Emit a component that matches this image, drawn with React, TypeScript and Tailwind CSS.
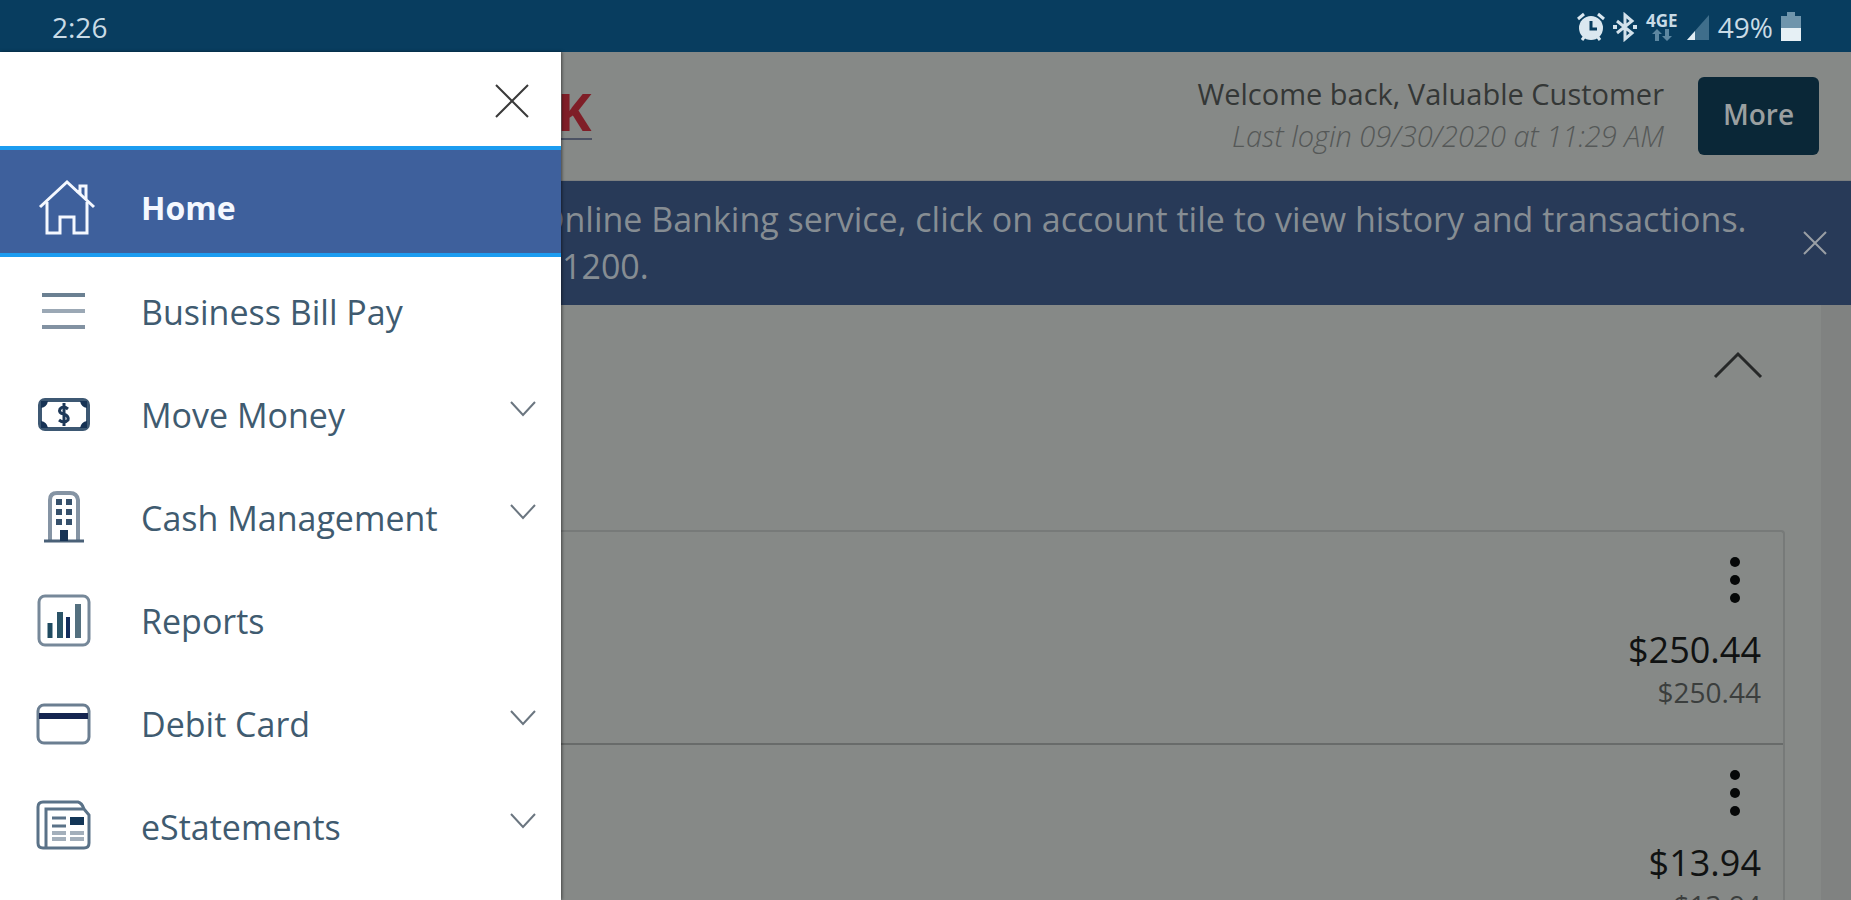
import type { ReactNode } from "react";

const HomeIcon = () => (
  <svg viewBox="0 0 56 60" className="h-[60px] w-14 overflow-visible" fill="none" stroke="#f4f8ff" strokeWidth="3">
    <path d="M4 29 L31 4 L58 29" />
    <path d="M41 13 L44 15 V8 H50 V21" />
    <path d="M11 24 V55 H24 V39 H38 V55 H51 V24" />
  </svg>
);

const LinesIcon = () => (
  <svg viewBox="0 0 56 60" className="h-[60px] w-14" strokeWidth="4">
    <path d="M6 13 H49" stroke="#6b8092" />
    <path d="M6 29 H49" stroke="#9ba8b5" />
    <path d="M6 45 H49" stroke="#8292a2" />
  </svg>
);

const MoneyIcon = () => (
  <svg viewBox="0 0 56 60" className="h-[60px] w-14" fill="none" stroke="#3d5873">
    <rect x="4" y="15" width="48" height="29" rx="5" strokeWidth="4" />
    <path d="M5 16 H12 Q11 22 5 23 Z M51 16 H44 Q45 22 51 23 Z M5 43 H12 Q11 37 5 36 Z M51 43 H44 Q45 37 51 36 Z" fill="#173355" stroke="none" />
    <path d="M32 24 Q27 20 24 24 Q22 28 28 29 Q33 31 32 35 Q28 39 23 35 M28 18 V41" stroke="#1d3858" strokeWidth="3" />
  </svg>
);

const BuildingIcon = () => (
  <svg viewBox="0 0 56 60" className="h-[60px] w-14" fill="none" stroke="#8594a4">
    <path d="M14 53 V12 Q14 5 21 5 H34 Q41 5 42 12 V53" strokeWidth="4" />
    <path d="M8 53 H48" stroke="#4a6178" strokeWidth="3" />
    <path d="M20 14 H26 M30 14 H36 M20 24 H26 M30 24 H36 M20 34 H26 M30 34 H36" stroke="#35506b" strokeWidth="6" />
    <path d="M24 53 V42 H32 V53 Z" fill="#173355" stroke="none" />
  </svg>
);

const ReportIcon = () => (
  <svg viewBox="0 0 56 60" className="h-[60px] w-14" fill="none" stroke="#768899">
    <rect x="3" y="5" width="50" height="49" rx="6" strokeWidth="3" />
    <path d="M14 47 V32" stroke="#1f4a60" strokeWidth="5" />
    <path d="M24 47 V21" stroke="#2b5468" strokeWidth="6" />
    <path d="M32 47 V26" stroke="#132c5c" strokeWidth="4" />
    <path d="M42 47 V13" stroke="#54707f" strokeWidth="6" />
  </svg>
);

const CardIcon = () => (
  <svg viewBox="0 0 56 60" className="h-[60px] w-14" fill="none" stroke="#6b7e91">
    <rect x="2" y="11" width="51" height="38" rx="6" strokeWidth="3" />
    <path d="M3 22 H52" stroke="#14244f" strokeWidth="6" />
  </svg>
);

const StatementIcon = () => (
  <svg viewBox="0 0 56 60" className="h-[60px] w-14" fill="none" stroke="#5a7288" strokeWidth="3">
    <path d="M10 50 V12 H48 L53 18 V46 Q53 51 48 51 H7 Q2 51 2 46 V10 Q2 5 7 5 H42 Q46 6 48 12" />
    <path d="M16 21 H30 M16 29 H30" />
    <path d="M16 36 H30 M16 42 H30 M34 36 H48 M34 42 H48" stroke="#a3afbb" strokeWidth="4" />
    <path d="M34 24 H48" stroke="#133657" strokeWidth="8" />
  </svg>
);

const Chevron = () => (
  <svg viewBox="0 0 28 16" className="mr-6 mb-3 h-4 w-7" fill="none" stroke="#6b7680" strokeWidth="2">
    <path d="M2 1 L14 14 L26 1" />
  </svg>
);

type NavItem = { label: string; icon: ReactNode; expandable?: boolean };

const navItems: NavItem[] = [
  { label: "Business Bill Pay", icon: <LinesIcon /> },
  { label: "Move Money", icon: <MoneyIcon />, expandable: true },
  { label: "Cash Management", icon: <BuildingIcon />, expandable: true },
  { label: "Reports", icon: <ReportIcon /> },
  { label: "Debit Card", icon: <CardIcon />, expandable: true },
  { label: "eStatements", icon: <StatementIcon />, expandable: true },
];

const accounts = [
  { balance: "$250.44", available: "$250.44" },
  { balance: "$13.94", available: "$13.94" },
];

const StatusBar = () => (
  <div className="flex h-[52px] shrink-0 items-center justify-between bg-[#083d5f] pt-0.5 pr-[50px] pl-[52px] text-[28px] leading-8 text-[#c9dbe6]">
    <span>2:26</span>
    <div className="flex items-center gap-1.5">
      {/* Alarm */}
      <svg viewBox="0 0 30 30" className="size-[30px]" fill="#dbe8f0">
        <circle cx="15" cy="16" r="12" />
        <path d="M2 7 L8 2 M28 7 L22 2 M6 28 L9 24 M24 28 L21 24" stroke="#dbe8f0" strokeWidth="3" />
        <path d="M15 9 V17 H21" fill="none" stroke="#083d5f" strokeWidth="3" />
      </svg>
      {/* Bluetooth */}
      <svg viewBox="0 0 26 30" className="h-[30px] w-[26px]" fill="none" stroke="#d3e2eb" strokeWidth="3">
        <path d="M5 9 L20 21 L13 27 V3 L20 9 L5 21" />
        <path d="M1 15 H5 M21 15 H25" strokeWidth="4" />
      </svg>
      {/* Network */}
      <div className="flex w-9 flex-col items-center">
        <span className="text-[17px] leading-4 font-bold">4GE</span>
        <svg viewBox="0 0 20 12" className="h-3 w-5" fill="#5d87a1">
          <path d="M5 0 L10 5 H7 V12 H3 V5 H0 Z M15 12 L10 7 H13 V0 H17 V7 H20 Z" />
        </svg>
      </div>
      <svg viewBox="0 0 24 28" className="h-7 w-6">
        <path d="M23 2 V27 H1 Z" fill="#3f6e8b" />
        <path d="M9 18 V27 H1 Z" fill="#e3eef4" />
      </svg>
      <span className="px-0.5">49%</span>
      <svg viewBox="0 0 20 30" className="h-[30px] w-5">
        <path d="M6 0 H14 V4 H20 V17 H0 V4 H6 Z" fill="#6f95ac" />
        <path d="M0 16 H20 V29 H0 Z" fill="#e6f0f5" />
      </svg>
    </div>
  </div>
);

const Drawer = () => (
  <aside className="absolute inset-y-0 left-0 w-[561px] overflow-hidden bg-white shadow-[1px_0_3px_rgba(0,0,0,0.5)]">
    <div className="flex h-[94px] items-center justify-end pt-1 pr-8">
      <button type="button" aria-label="Close menu">
        <svg viewBox="0 0 34 34" className="size-[34px]" fill="none" stroke="#3a3a3a" strokeWidth="2">
          <path d="M1 1 L33 33 M33 1 L1 33" />
        </svg>
      </button>
    </div>
    <nav className="text-[34px] leading-10 text-[#3f5b70]">
      <a href="#home" className="flex h-[111px] items-center border-y-4 border-[#1c9cf0] bg-[#3e609c] pt-3 pl-9 text-[32px] font-bold text-[#f4f8ff]">
        <HomeIcon />
        <span className="pl-[49px]">Home</span>
      </a>
      <div className="pt-[3px]">
        {navItems.map((item) => (
          <button key={item.label} type="button" className="flex h-[103px] w-full items-center pl-9 text-left">
            {item.icon}
            <span className="flex-1 pl-[49px]">{item.label}</span>
            {item.expandable && <Chevron />}
          </button>
        ))}
      </div>
    </nav>
  </aside>
);

const App = () => {
  return (
    <div className="flex h-screen flex-col overflow-hidden font-['Open_Sans','Noto_Sans',sans-serif]">
      <StatusBar />
      <div className="relative flex min-h-0 flex-1 flex-col bg-[#868987]">
        {/* Header */}
        <header className="flex h-[129px] shrink-0 items-start justify-between border-b border-[#7c7f80] pr-8 pl-[557px]">
          <div className="mt-8 h-14 border-b-2 border-[#4c5263] text-[52px] leading-[54px] font-bold text-[#7f1e27]">K</div>
          <div className="flex gap-[34px] pt-[25px]">
            <div className="-mt-1 text-right text-[29px] leading-[42px]">
              <p className="text-[#343736]">Welcome back, Valuable Customer</p>
              <p className="font-light text-[#555857] italic">Last login 09/30/2020 at 11:29 AM</p>
            </div>
            <button type="button" className="h-[78px] w-[121px] rounded-md bg-[#0a2737] pb-1 text-[28px] font-semibold text-[#9a9fa0]">More</button>
          </div>
        </header>

        {/* Notice */}
        <div className="flex h-[124px] shrink-0 items-center justify-between bg-[#283a58] pr-6 pl-[538px]">
          <p className="text-[34px] leading-[47px] text-[#868d93]">
            Online Banking service, click on account tile to view history and transactions.
            <br />
            <span className="pl-6">1200.</span>
          </p>
          <button type="button" aria-label="Dismiss message">
            <svg viewBox="0 0 24 24" className="size-6" fill="none" stroke="#9a9fa5" strokeWidth="2">
              <path d="M1 1 L23 23 M23 1 L1 23" />
            </svg>
          </button>
        </div>

        {/* Accounts */}
        <main className="mr-[30px] flex-1 pr-9 shadow-[30px_0_0_#808281]">
          <div className="flex h-[225px] items-start justify-end pt-[46px] pr-[22px]">
            <button type="button" aria-label="Collapse accounts">
              <svg viewBox="0 0 50 28" className="h-7 w-[50px]" fill="none" stroke="#262828" strokeWidth="3">
                <path d="M2 26 L25 3 L48 26" />
              </svg>
            </button>
          </div>
          <ul className="rounded-tr border-t-2 border-r-2 border-[#777a79]">
            {accounts.map((account) => (
              <li key={account.balance} className="flex h-[213px] flex-col items-end border-b-2 border-[#686b6a] pt-6 pr-[22px]">
                <button type="button" aria-label="Account options" className="mr-5">
                  <svg viewBox="0 0 12 48" className="h-12 w-3" fill="#060808">
                    <circle cx="6" cy="6" r="5" />
                    <circle cx="6" cy="24" r="5" />
                    <circle cx="6" cy="42" r="5" />
                  </svg>
                </button>
                <span className="pt-6 text-[36px] leading-[44px] text-[#101212]">{account.balance}</span>
                <span className="text-[28px] leading-10 text-[#3b3e3d]">{account.available}</span>
              </li>
            ))}
          </ul>
        </main>

        <Drawer />
      </div>
    </div>
  );
};

export default App;
